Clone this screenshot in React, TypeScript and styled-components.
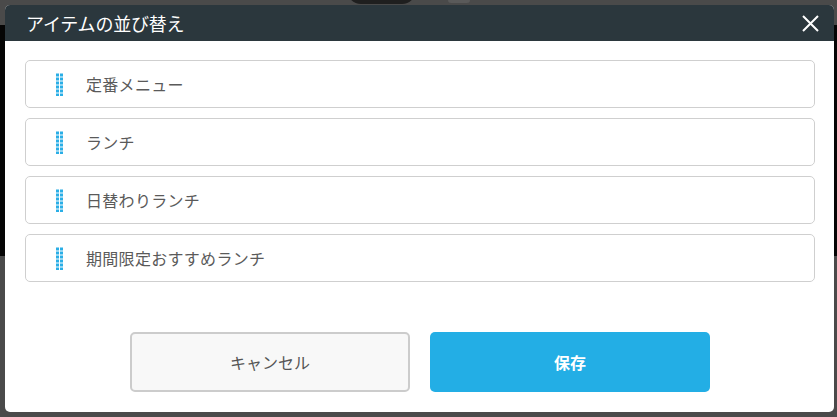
import React from "react";
import styled, { createGlobalStyle } from "styled-components";

const Global = createGlobalStyle`
  html, body { margin: 0; padding: 0; }
  body {
    width: 837px;
    height: 417px;
    overflow: hidden;
    background: #4a4a4a;
    font-family: "Noto Sans CJK JP", "Noto Sans", sans-serif;
  }
`;

const Page = styled.div`
  position: relative;
  width: 837px;
  height: 417px;
  background: #4a4a4a;
  overflow: hidden;
`;

const BackdropBand = styled.div`
  position: absolute;
  left: 0;
  right: 0;
  top: 25px;
  height: 231px;
  background: #050505;
`;

const TopBlob = styled.div`
  position: absolute;
  left: 347px;
  top: -10px;
  width: 69px;
  height: 14px;
  background: #1f1f1f;
  border-radius: 0 0 30px 30px;
`;

const TopTab = styled.div`
  position: absolute;
  left: 448px;
  top: -4px;
  width: 22px;
  height: 7px;
  background: #5a5a5a;
  border-radius: 3px;
`;

const Modal = styled.div`
  position: absolute;
  left: 5px;
  top: 5px;
  width: 829px;
  height: 407px;
  background: #fff;
  border-radius: 5px;
  overflow: hidden;
  display: flex;
  flex-direction: column;
`;

const Header = styled.div`
  height: 36px;
  background: #2b373d;
  display: flex;
  align-items: center;
  justify-content: space-between;
  padding: 0 14px 0 21px;
  flex-shrink: 0;
`;

const Title = styled.h2`
  margin: 0;
  color: #fff;
  font-size: 18px;
  font-weight: 400;
  letter-spacing: -0.2px;
`;

const CloseButton = styled.button`
  border: none;
  background: none;
  padding: 0;
  width: 20px;
  height: 20px;
  display: flex;
  align-items: center;
  justify-content: center;
  cursor: pointer;
`;

const Body = styled.div`
  padding: 19px 19px 0 20px;
  display: flex;
  flex-direction: column;
  gap: 10px;
`;

const Item = styled.div`
  height: 46px;
  border: 1px solid #cfcfcf;
  border-radius: 5px;
  display: flex;
  align-items: center;
  padding-left: 29px;
  gap: 23px;
`;

const ItemLabel = styled.span`
  font-size: 16px;
  color: #5a5a5a;
  letter-spacing: 0.3px;
`;

const Footer = styled.div`
  margin-top: 50px;
  display: flex;
  justify-content: center;
  gap: 20px;
  padding-left: 1px;
`;

const Btn = styled.button<{ $primary?: boolean }>`
  width: 280px;
  height: 60px;
  border-radius: 5px;
  font-family: inherit;
  font-size: 16px;
  cursor: pointer;
  border: ${(p) => (p.$primary ? "none" : "2px solid #cccccc")};
  background: ${(p) => (p.$primary ? "#23aee5" : "#f8f8f8")};
  color: ${(p) => (p.$primary ? "#fff" : "#555")};
  font-weight: ${(p) => (p.$primary ? 700 : 400)};
`;

const Handle = () => (
  <svg width="8" height="23" viewBox="0 0 8 23">
    {[0, 1, 2, 3, 4, 5].map((r) =>
      [0, 1].map((c) => (
        <rect key={`${r}-${c}`} x={c * 4 + 1} y={r * 4 + 0.5} width="3" height="3" fill="#2aaee6" />
      ))
    )}
  </svg>
);

const items = ["定番メニュー", "ランチ", "日替わりランチ", "期間限定おすすめランチ"];

export default function App() {
  return (
    <Page>
      <Global />
      <BackdropBand />
      <TopBlob />
      <TopTab />
      <Modal>
        <Header>
          <Title>アイテムの並び替え</Title>
          <CloseButton aria-label="close">
            <svg width="17" height="17" viewBox="0 0 17 17">
              <path d="M1 1 L16 16 M16 1 L1 16" stroke="#fff" strokeWidth="2" />
            </svg>
          </CloseButton>
        </Header>
        <Body>
          {items.map((t) => (
            <Item key={t}>
              <Handle />
              <ItemLabel>{t}</ItemLabel>
            </Item>
          ))}
        </Body>
        <Footer>
          <Btn>キャンセル</Btn>
          <Btn $primary>保存</Btn>
        </Footer>
      </Modal>
    </Page>
  );
}
